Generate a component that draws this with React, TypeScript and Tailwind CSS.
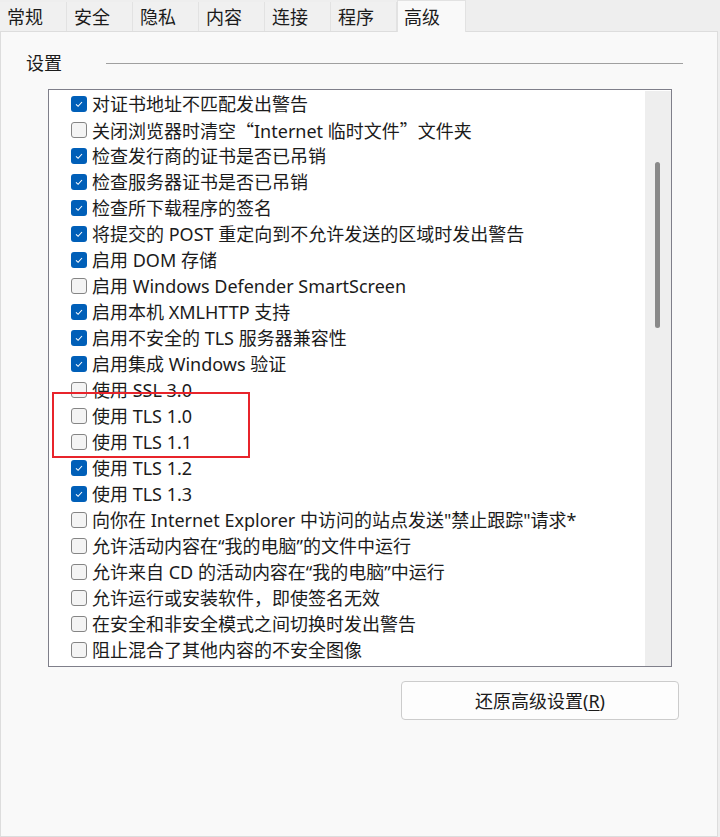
import type { ReactNode } from "react";

const tabs = ["常规", "安全", "隐私", "内容", "连接", "程序"];

const Q = ({ c }: { c: string }) => <span className="font-['Noto_Sans_CJK_SC',sans-serif]">{c}</span>;

const items: [boolean, ReactNode][] = [
  [true, "对证书地址不匹配发出警告"],
  [
    false,
    <>
      关闭浏览器时清空<Q c="“" />Internet 临时文件<Q c="”" />文件夹
    </>,
  ],
  [true, "检查发行商的证书是否已吊销"],
  [true, "检查服务器证书是否已吊销"],
  [true, "检查所下载程序的签名"],
  [true, "将提交的 POST 重定向到不允许发送的区域时发出警告"],
  [true, "启用 DOM 存储"],
  [false, "启用 Windows Defender SmartScreen"],
  [true, "启用本机 XMLHTTP 支持"],
  [true, "启用不安全的 TLS 服务器兼容性"],
  [true, "启用集成 Windows 验证"],
  [false, "使用 SSL 3.0"],
  [false, "使用 TLS 1.0"],
  [false, "使用 TLS 1.1"],
  [true, "使用 TLS 1.2"],
  [true, "使用 TLS 1.3"],
  [false, "向你在 Internet Explorer 中访问的站点发送\"禁止跟踪\"请求*"],
  [false, "允许活动内容在“我的电脑”的文件中运行"],
  [false, "允许来自 CD 的活动内容在“我的电脑”中运行"],
  [false, "允许运行或安装软件，即使签名无效"],
  [false, "在安全和非安全模式之间切换时发出警告"],
  [false, "阻止混合了其他内容的不安全图像"],
];

function Checkbox({ checked }: { checked: boolean }) {
  if (checked) {
    return (
      <span className="w-4 h-4 rounded-[3px] bg-[#005fb8] flex items-center justify-center shrink-0">
        <svg width="10" height="10" viewBox="0 0 10 10">
          <path d="M2 5.3 L4.1 7.3 L8 3" fill="none" stroke="white" strokeWidth="1.1" />
        </svg>
      </span>
    );
  }
  return <span className="w-4 h-4 rounded-[3px] bg-[#f4f4f4] border border-[#858585] shrink-0" />;
}

export default function App() {
  return (
    <div className="relative w-[720px] h-[837px] bg-[#eeeeee] text-[#1b1b1b] font-['Noto_Sans','Noto_Sans_CJK_SC',sans-serif] text-[18px] overflow-hidden">
      {/* tab strip */}
      <div className="flex h-[31px] items-end">
        {tabs.map((t, i) => (
          <div
            key={t}
            className={`h-[29px] ${i === 0 ? "w-[67px]" : "w-[66px]"} bg-[#f0f0f0] border-r border-[#e2e2e2] pl-[7px] flex items-center leading-none`}
          >
            {t}
          </div>
        ))}
        <div className="relative z-10 h-[32px] w-[69px] -mb-px bg-[#f9f9f9] border border-b-0 border-[#e2e2e2] pl-[6px] flex items-center leading-none">
          高级
        </div>
      </div>

      {/* panel */}
      <div className="w-[718px] h-[806px] bg-[#f9f9f9] border border-[#dddddd]">
        <div className="mt-[18px] h-[26px] flex items-center pl-[25px]">
          <span className="leading-none">设置</span>
          <div className="ml-[44px] w-[577px] h-px bg-[#a0a0a0]" />
        </div>

        <div className="mt-[13px] ml-[47px] w-[624px] h-[578px] border border-[#7f7f8a] bg-white flex">
          <div className="flex-1 pt-px pl-[22px]">
            {items.map(([c, label], i) => (
              <div key={i} className="h-[26px] flex items-center gap-[5px] whitespace-nowrap leading-none">
                <Checkbox checked={c} />
                <span>{label}</span>
              </div>
            ))}
          </div>
          <div className="w-[26px] mt-px bg-[#eeeeee] pt-[71px] pl-[10px]">
            <div className="w-[5px] h-[166px] rounded-full bg-[#898989]" />
          </div>
        </div>

        <button className="mt-[14px] ml-[400px] w-[278px] h-[39px] rounded-[4px] border border-[#cccccc] bg-[#fdfdfd] flex items-center justify-center leading-none">
          还原高级设置(<span className="underline underline-offset-2">R</span>)
        </button>
      </div>

      {/* annotation */}
      <div className="absolute left-[52px] top-[392px] w-[198px] h-[66px] border-2 border-[#e8242b]" />
    </div>
  );
}
